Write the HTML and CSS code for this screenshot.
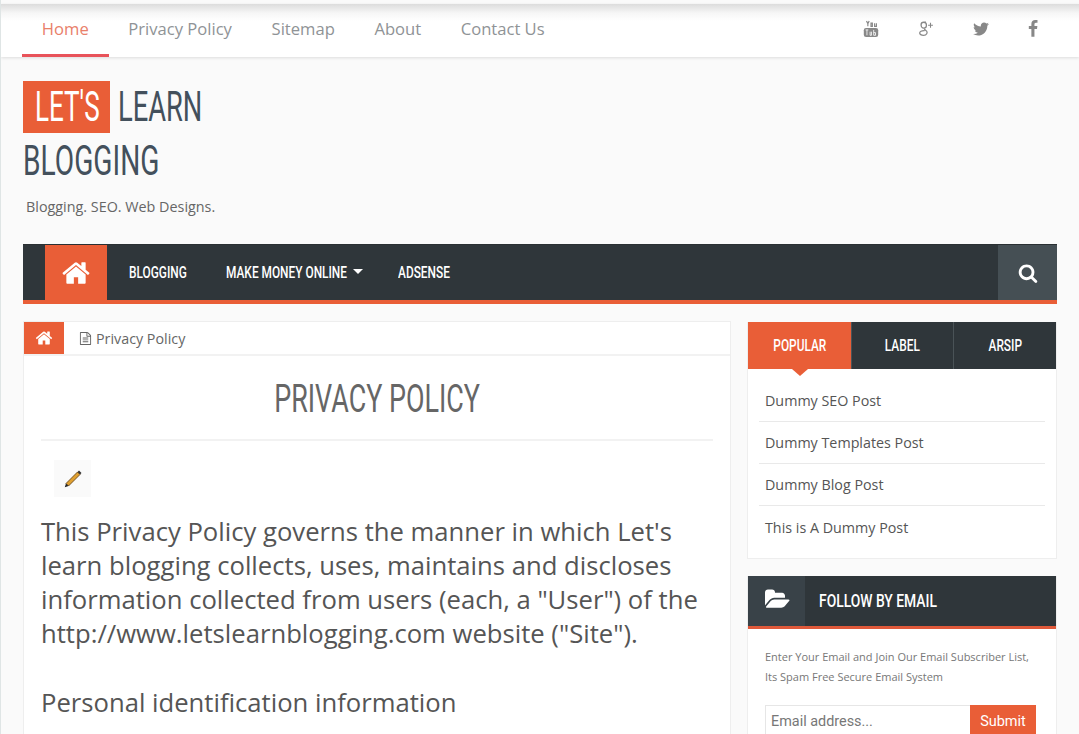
FILE: index.html
```html
<!DOCTYPE html>
<html lang="en">
<head>
  <meta charset="UTF-8">
  <meta name="viewport" content="width=device-width, initial-scale=1.0">
  <title>Privacy Policy - Let's Learn Blogging</title>
  <link rel="stylesheet" href="styles.css">
</head>
<body>
  <!-- Top menu -->
  <div class="topbar">
    <ul class="top-links">
      <li class="active">Home</li>
      <li>Privacy Policy</li>
      <li>Sitemap</li>
      <li>About</li>
      <li>Contact Us</li>
    </ul>
    <div class="top-social">
      <svg class="social-icon" viewBox="0 0 18 20">
        <path d="M4 1l1.500 3 1.500-3M5.500 4v3M9 3.500h1.500v3.500H9zM13 3.500v3.500h2v-3.500" fill="none" stroke="#888" stroke-width="1.300"/>
        <rect x="1" y="9" width="16" height="10" rx="2.500" fill="#888"/>
        <path d="M3 11h3M4.500 11v6M8 13v4h1.500v-4M12 11v6h2v-3h-2" fill="none" stroke="#fff" stroke-width=".9"/>
      </svg>
      <svg class="social-icon" viewBox="0 0 18 20">
        <path d="M9 2.500H6.500C4.500 2.500 3.500 4 3.500 5.500S4.700 9 6.500 9 9.500 7.500 9.500 5.800 8.500 2.500 6.500 2.500M7.500 9.500c-.8 1 1.500 1.800 2.300 3 1 1.500.2 4.500-3.500 4.500-2.800 0-4.300-1.200-4.300-2.500 0-1.600 2-2.800 5.500-2.600" fill="none" stroke="#888" stroke-width="1.400"/>
        <path d="M14 3v5.500M11.300 5.800h5.400" fill="none" stroke="#888" stroke-width="1.200"/>
      </svg>
      <svg class="social-icon" viewBox="0 0 1792 1792"><path fill="#888" d="M1684 408q-67 98-162 167 1 14 1 42 0 130-38 259.500t-115.500 248.500-184.500 210.500-258 146-323 54.500q-271 0-496-145 35 4 78 4 225 0 401-138-105-2-188-64.500t-114-159.500q33 5 61 5 43 0 85-11-112-23-185.500-111.500t-73.500-205.500v-4q68 38 146 41-66-44-105-115t-39-154q0-88 44-163 121 149 294.500 238.500t371.500 99.500q-8-38-8-74 0-134 94.500-228.500t228.500-94.500q140 0 236 102 109-21 205-78-37 115-142 178 92-10 184-50z"/></svg>
      <svg class="social-icon social-fb" viewBox="0 0 1792 1792"><path fill="#888" d="M1343 12v264h-157q-86 0-116 36t-30 108v189h293l-39 296h-254v759h-306v-759h-255v-296h255v-218q0-186 104-288.500t277-102.500q147 0 228 12z"/></svg>
    </div>
  </div>

  <div class="wrap">
    <!-- Logo -->
    <header class="site-head">
      <h1 class="logo">
        <span class="logo-line">
          <span class="logo-mark"><span class="squeeze">LET'S</span></span>
          <span class="logo-word"><span class="squeeze">LEARN</span></span>
        </span>
        <span class="logo-line"><span class="squeeze">BLOGGING</span></span>
      </h1>
      <p class="tagline">Blogging. SEO. Web Designs.</p>
    </header>

    <!-- Main menu -->
    <nav class="mainnav">
      <div class="nav-home">
        <svg class="home-icon" viewBox="0 0 1792 1792"><path fill="#fff" d="M1472 992v480q0 26-19 45t-45 19h-384v-384h-256v384h-384q-26 0-45-19t-19-45v-480q0-1 .5-3t.5-3l575-474 575 474q1 2 1 6zm223-69l-62 74q-8 9-21 11h-3q-13 0-21-7l-692-577-692 577q-12 8-24 7-13-2-21-11l-62-74q-8-10-7-23.500t11-21.500l719-599q32-26 76-26t76 26l244 204v-195q0-14 9-23t23-9h192q14 0 23 9t9 23v408l219 182q10 8 11 21.500t-7 23.500z"/></svg>
      </div>
      <ul class="nav-links">
        <li><span class="squeeze">BLOGGING</span></li>
        <li class="has-sub"><span class="squeeze">MAKE MONEY ONLINE</span></li>
        <li><span class="squeeze">ADSENSE</span></li>
      </ul>
      <div class="nav-search">
        <svg class="search-icon" viewBox="0 0 1792 1792"><path fill="#fff" d="M1216 832q0-185-131.500-316.500t-316.500-131.500-316.500 131.500-131.500 316.500 131.500 316.500 316.500 131.500 316.500-131.500 131.500-316.500zm512 832q0 52-38 90t-90 38q-54 0-90-38l-343-342q-179 124-399 124-143 0-273.500-55.500t-225-150-150-225-55.500-273.500 55.500-273.500 150-225 225-150 273.500-55.500 273.500 55.500 225 150 150 225 55.500 273.500q0 220-124 399l343 343q37 37 37 90z"/></svg>
      </div>
    </nav>

    <div class="columns">
      <!-- Post -->
      <main class="post">
        <div class="crumbs">
          <div class="crumb-home">
            <svg class="crumb-icon" viewBox="0 0 1792 1792"><path fill="#fff" d="M1472 992v480q0 26-19 45t-45 19h-384v-384h-256v384h-384q-26 0-45-19t-19-45v-480q0-1 .5-3t.5-3l575-474 575 474q1 2 1 6zm223-69l-62 74q-8 9-21 11h-3q-13 0-21-7l-692-577-692 577q-12 8-24 7-13-2-21-11l-62-74q-8-10-7-23.500t11-21.500l719-599q32-26 76-26t76 26l244 204v-195q0-14 9-23t23-9h192q14 0 23 9t9 23v408l219 182q10 8 11 21.500t-7 23.500z"/></svg>
          </div>
          <div class="crumb-page">
            <svg class="file-icon" viewBox="0 0 1792 1792"><path fill="#666" d="M1596 380q28 28 48 76t20 88v1152q0 40-28 68t-68 28h-1344q-40 0-68-28t-28-68v-1600q0-40 28-68t68-28h896q40 0 88 20t76 48zm-444-244v376h376q-10-29-22-41l-313-313q-12-12-41-22zm384 1528v-1024h-416q-40 0-68-28t-28-68v-416h-768v1536h1280zm-1024-864q0-14 9-23t23-9h704q14 0 23 9t9 23v64q0 14-9 23t-23 9h-704q-14 0-23-9t-9-23v-64zm736 224q14 0 23 9t9 23v64q0 14-9 23t-23 9h-704q-14 0-23-9t-9-23v-64q0-14 9-23t23-9h704zm0 256q14 0 23 9t9 23v64q0 14-9 23t-23 9h-704q-14 0-23-9t-9-23v-64q0-14 9-23t23-9h704z"/></svg>
            Privacy Policy
          </div>
        </div>
        <div class="post-body">
          <h2 class="post-title"><span class="squeeze">PRIVACY POLICY</span></h2>
          <div class="pencil-box">
            <svg class="pencil" viewBox="0 0 20 20">
              <path d="M3 14.500L14.500 3l2.500 2.500L5.500 17z" fill="#e0a030" stroke="#5a3a10" stroke-width=".8"/>
              <path d="M3 14.500L1.800 18.200 5.500 17z" fill="#222"/>
              <path d="M14.500 3L16 1.500l2.500 2.500L17 5.500z" fill="#333"/>
            </svg>
          </div>
          <p class="post-text">This Privacy Policy governs the manner in which Let's learn blogging collects, uses, maintains and discloses information collected from users (each, a "User") of the http://www.letslearnblogging.com website ("Site").</p>
          <h3 class="post-sub">Personal identification information</h3>
        </div>
      </main>

      <!-- Sidebar -->
      <aside class="sidebar">
        <div class="tabbox">
          <div class="tabs">
            <div class="tab active"><span class="squeeze">POPULAR</span></div>
            <div class="tab"><span class="squeeze">LABEL</span></div>
            <div class="tab"><span class="squeeze">ARSIP</span></div>
          </div>
          <ul class="post-list">
            <li>Dummy SEO Post</li>
            <li>Dummy Templates Post</li>
            <li>Dummy Blog Post</li>
            <li>This is A Dummy Post</li>
          </ul>
        </div>
        <div class="follow">
          <div class="follow-head">
            <div class="follow-icon">
              <svg class="folder-icon" viewBox="0 0 1920 1792"><path fill="#fff" d="M1879 952q0 31-31 66l-336 396q-43 51-120.500 86.500t-143.500 35.500h-1088q-34 0-60.500-13t-26.500-43q0-31 31-66l336-396q43-51 120.500-86.500t143.500-35.500h1088q34 0 60.500 13t26.500 43zm-343-344v160h-832q-94 0-197 47.500t-164 119.500l-337 396-5 6q0-4-.5-12.500t-.5-12.500v-960q0-92 66-158t158-66h320q92 0 158 66t66 158v32h544q92 0 158 66t66 158z"/></svg>
            </div>
            <h4 class="follow-title"><span class="squeeze">FOLLOW BY EMAIL</span></h4>
          </div>
          <div class="follow-body">
            <p class="follow-text">Enter Your Email and Join Our Email Subscriber List, Its Spam Free Secure Email System</p>
            <form class="follow-form">
              <input class="follow-input" type="text" placeholder="Email address...">
              <button class="follow-btn" type="button">Submit</button>
            </form>
          </div>
        </div>
      </aside>
    </div>
  </div>
</body>
</html>
```

FILE: styles.css
```css
html, body {
  height: 100%;
  overflow: hidden;
}

body {
  margin: 0;
  background: #fafafa;
  border-left: 1px solid #dfe5e5;
  font-family: "Open Sans", sans-serif;
  color: #555;
}

ul {
  list-style: none;
  margin: 0;
  padding: 0;
}

/* no condensed font here, so narrow the headline text by hand */
.squeeze {
  display: inline-block;
  white-space: nowrap;
  transform: scaleX(0.72);
  transform-origin: left center;
}

/* top menu */
.topbar {
  display: flex;
  justify-content: space-between;
  margin-top: 4px;
  height: 53px;
  background: linear-gradient(#dcdcdc, #f6f6f6 9px, #fff 17px);
  box-shadow: 0 1px 3px rgba(0, 0, 0, 0.12);
}

.top-links {
  display: flex;
  margin-left: 21px;
}

.top-links li {
  height: 50px;
  line-height: 50px;
  padding: 0 19.8px;
  font-size: 16.6px;
  color: #8f9396;
  border-bottom: 3px solid transparent;
}

.top-links li.active {
  color: #e9806a;
  border-bottom-color: #e8535a;
}

.top-social {
  display: flex;
  align-items: center;
  gap: 37px;
  height: 50px;
  margin-right: 37px;
}

.social-icon {
  width: 18px;
  height: 18px;
}

.social-fb {
  margin-left: -3px;
}

/* logo */
.wrap {
  padding: 0 22px;
}

.site-head {
  height: 187px;
  padding-top: 24px;
  box-sizing: border-box;
}

.logo {
  margin: 0;
  font-family: "Roboto", sans-serif;
  font-size: 42px;
  font-weight: 400;
  color: #43505c;
}

.logo .squeeze {
  transform: scaleX(0.67);
}

.logo .logo-mark .squeeze {
  transform: scaleX(0.62);
}

.logo .logo-word .squeeze {
  transform: scaleX(0.65);
}

.logo-line {
  display: flex;
  align-items: flex-start;
  height: 53px;
  line-height: 52px;
}

.logo-line + .logo-line {
  line-height: 54px;
}

.logo-mark {
  width: 87px;
  height: 52px;
  padding-left: 12px;
  box-sizing: border-box;
  background: #e95e37;
  color: #fff;
}

.logo-word {
  margin-left: 8px;
}

.tagline {
  margin: 10px 0 0 3px;
  font-size: 14.35px;
  line-height: 20px;
  color: #666;
}

/* main menu */
.mainnav {
  display: flex;
  height: 55px;
  background: #2f363a;
  border-top: 1px solid #2a3033;
  border-bottom: 4px solid #e95e37;
  font-family: "Roboto", sans-serif;
}

.nav-home {
  display: flex;
  justify-content: center;
  align-items: center;
  width: 62px;
  margin-left: 22px;
  background: #e95e37;
}

.home-icon {
  width: 30px;
  height: 30px;
}

.nav-links {
  display: grid;
  grid-template-columns: 59px 134px 51px;
  flex: 1;
  padding-left: 22px;
  gap: 38px;
}

.nav-links li {
  position: relative;
  line-height: 55px;
  font-size: 16.5px;
  font-weight: 500;
  color: #fff;
}

.nav-links li.has-sub::after {
  content: "";
  position: absolute;
  top: 24px;
  left: 127px;
  border-top: 5px solid #fff;
  border-left: 5px solid transparent;
  border-right: 5px solid transparent;
}

.nav-search {
  display: flex;
  justify-content: center;
  align-items: center;
  width: 59px;
  background: #454f54;
}

.search-icon {
  width: 20px;
  height: 20px;
}

/* columns */
.columns {
  display: flex;
  gap: 16px;
  margin-top: 17px;
}

.post {
  width: 708px;
  flex: none;
  box-sizing: border-box;
  background: #fff;
  border: 1px solid #eee;
}

.crumbs {
  display: flex;
  height: 32px;
  border-bottom: 2px solid #f2f2f2;
}

.crumb-home {
  display: flex;
  justify-content: center;
  align-items: center;
  width: 40px;
  background: #e95e37;
}

.crumb-icon {
  width: 18px;
  height: 18px;
}

.crumb-page {
  display: flex;
  align-items: center;
  gap: 4px;
  padding-left: 15px;
  font-size: 14.3px;
  color: #666;
}

.file-icon {
  width: 13px;
  height: 13px;
}

.post-body {
  padding: 0 17px;
}

.post-title {
  margin: 0;
  height: 85px;
  line-height: 86px;
  box-sizing: border-box;
  border-bottom: 2px solid #f2f2f2;
  font-family: "Roboto", sans-serif;
  font-size: 39px;
  font-weight: 400;
  text-align: center;
  color: #666;
}

.post-title .squeeze {
  transform: scaleX(0.69);
  transform-origin: center;
}

.pencil-box {
  display: flex;
  justify-content: center;
  align-items: center;
  width: 37px;
  height: 37px;
  margin: 19px 0 0 13px;
  background: #fafafa;
}

.pencil {
  width: 20px;
  height: 20px;
}

.post-text {
  margin: 18px 0 0;
  font-size: 25.65px;
  line-height: 34px;
  color: #555;
}

.post-sub {
  margin: 35px 0 0;
  font-size: 25.65px;
  font-weight: 400;
  line-height: 34px;
  color: #555;
}

/* sidebar */
.sidebar {
  width: 310px;
  flex: none;
}

.tabbox {
  background: #fff;
  border: 1px solid #eee;
  border-top: 0;
}

.tabs {
  display: flex;
  margin-top: 1px;
  height: 47px;
  background: #2f363a;
  font-family: "Roboto", sans-serif;
}

.tab {
  flex: 1;
  position: relative;
  line-height: 47px;
  text-align: center;
  font-size: 16.5px;
  font-weight: 500;
  color: #fff;
  border-left: 1px solid #4a5357;
}

.tab .squeeze {
  transform-origin: center;
}

.tab.active {
  background: #e95e37;
  border-left-color: #e95e37;
}

.tab.active::after {
  content: "";
  position: absolute;
  top: 100%;
  left: 50%;
  margin-left: -8px;
  border-top: 7px solid #e95e37;
  border-left: 8px solid transparent;
  border-right: 8px solid transparent;
}

.post-list {
  padding: 11px 11px 10px;
}

.post-list li {
  height: 41px;
  line-height: 41px;
  padding-left: 6px;
  font-size: 14.3px;
  color: #555;
  border-bottom: 1px solid #e9e9e9;
}

.post-list li:last-child {
  height: 42px;
  line-height: 43px;
  border-bottom: 0;
}

.follow {
  margin-top: 17px;
  background: #fff;
  border: 1px solid #eee;
  border-top: 0;
  height: 400px;
}

.follow-head {
  display: flex;
  height: 50px;
  background: #2f363a;
  border-bottom: 3px solid #e0593a;
}

.follow-icon {
  display: flex;
  justify-content: center;
  align-items: center;
  width: 57px;
  background: #394248;
}

.folder-icon {
  width: 25px;
  height: 25px;
  margin: -3px 0 0 1px;
}

.follow-title {
  margin: 0 0 0 14px;
  font-family: "Roboto", sans-serif;
  font-size: 19px;
  font-weight: 500;
  line-height: 50px;
  color: #fff;
}

.follow-title .squeeze {
  transform: scaleX(0.73);
}

.follow-body {
  padding: 18px 17px;
}

.follow-text {
  margin: 0;
  font-size: 11px;
  line-height: 20px;
  color: #777;
}

.follow-form {
  display: flex;
  margin-top: 18px;
}

.follow-input {
  width: 205px;
  height: 31px;
  box-sizing: border-box;
  padding: 2px 6px 0 5px;
  border: 1px solid #e6e6e6;
  border-right: 0;
  font-family: "Roboto", sans-serif;
  font-size: 14.4px;
  outline: none;
}

.follow-input::placeholder {
  color: #777;
}

.follow-btn {
  width: 66px;
  height: 31px;
  border: 0;
  padding: 2px 0 0;
  background: #e95e37;
  color: #fff;
  font-family: "Roboto", sans-serif;
  font-size: 14.5px;
}
```
